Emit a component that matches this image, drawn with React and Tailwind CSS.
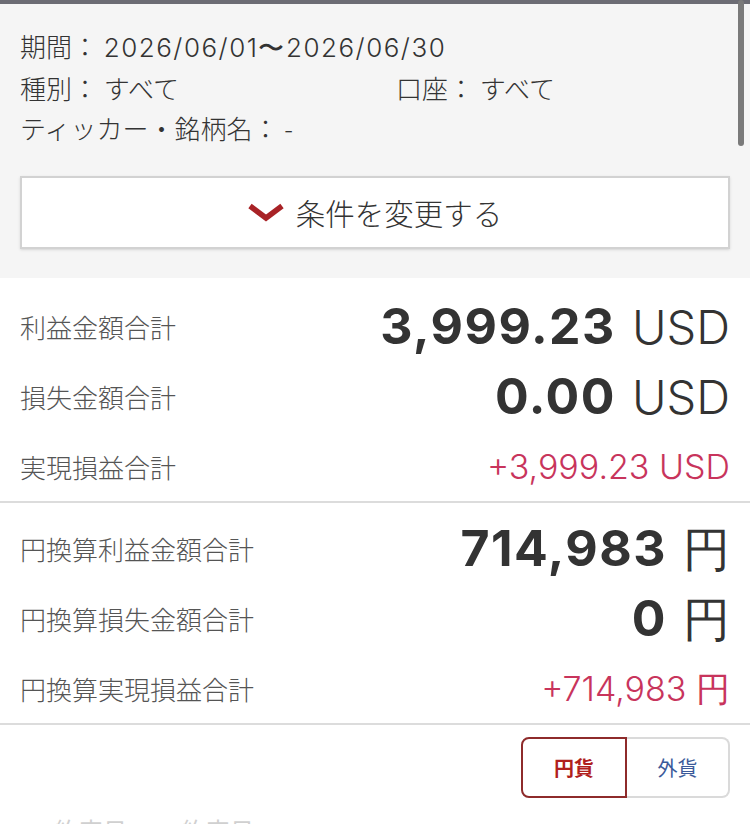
const JP = { fontFamily: '"Noto Sans CJK JP", sans-serif' };

function Row({ label, children }) {
  return (
    <div className="flex items-center justify-between h-[70px] px-5">
      <span className="text-[26px] font-light text-[#555]">{label}</span>
      <div className="flex items-baseline">{children}</div>
    </div>
  );
}

function Big({ value, unit }) {
  return (
    <>
      <span className="font-['Inter'] font-bold text-[50px] text-[#333] tracking-[1.5px]">{value}</span>
      <span className="ml-4 font-['Inter'] font-light text-[47px] text-[#333]">{unit}</span>
    </>
  );
}

function Red({ children }) {
  return <span className="font-['Inter'] font-light text-[34px] text-[#c8345c]">{children}</span>;
}

export default function App() {
  return (
    <div className="relative w-[750px] h-[824px] overflow-hidden bg-white" style={JP}>
      <div className="h-1 bg-[#6c6c74]" />
      <div className="absolute right-[6px] top-0 w-[6px] h-[146px] rounded-full bg-[#7a7a7a]" />

      <section className="bg-[#f5f5f5] px-5 pt-[22px] pb-[29px]">
        <div className="text-[26px] leading-[40px] font-light text-[#333]">
          <div>期間： <span className="font-['Inter'] font-light tracking-[1.5px]">2026/06/01〜2026/06/30</span></div>
          <div className="flex">
            <span className="w-[376px]">種別： すべて</span>
            <span>口座： すべて</span>
          </div>
          <div>ティッカー・銘柄名： -</div>
        </div>
        <button className="mt-7 w-full h-[73px] flex items-center justify-center gap-3 bg-white border-2 border-[#d2d2d2] shadow-sm">
          <svg width="36" height="20" viewBox="0 0 36 20">
            <path d="M2 3 L18 15 L34 3" fill="none" stroke="#a82226" strokeWidth="5.5" />
          </svg>
          <span className="text-[29.5px] font-light text-[#333]">条件を変更する</span>
        </button>
      </section>

      <section className="pt-[13px] border-b-2 border-[#dcdcdc]">
        <Row label="利益金額合計"><Big value="3,999.23" unit="USD" /></Row>
        <Row label="損失金額合計"><Big value="0.00" unit="USD" /></Row>
        <Row label="実現損益合計"><Red>+3,999.23 USD</Red></Row>
      </section>

      <section className="pt-[10px] border-b-2 border-[#dcdcdc]">
        <Row label="円換算利益金額合計"><Big value="714,983" unit="円" /></Row>
        <Row label="円換算損失金額合計"><Big value="0" unit="円" /></Row>
        <Row label="円換算実現損益合計"><Red>+714,983 円</Red></Row>
      </section>

      <div className="flex justify-end px-5 pt-[12px]">
        <div className="flex h-[61px] rounded-lg">
          <button className="w-[106px] rounded-l-lg border-2 border-[#8e2b2b] text-[20px] font-bold text-[#b0201c]">円貨</button>
          <button className="w-[103px] rounded-r-lg border-2 border-l-0 border-[#dadada] text-[20px] text-[#3b5a9a]">外貨</button>
        </div>
      </div>

      <div className="flex gap-[55px] px-[55px] pt-[20px] text-[24px] leading-none text-[#d0d0d0]">
        <span>約定日</span>
        <span>約定日</span>
      </div>
    </div>
  );
}
